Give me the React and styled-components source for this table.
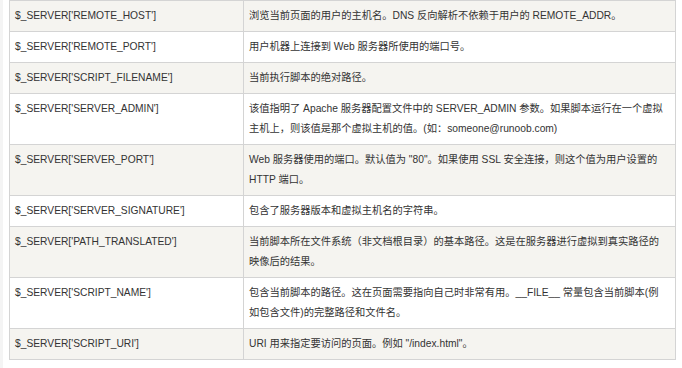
import React from "react";
import styled, { createGlobalStyle } from "styled-components";

const Global = createGlobalStyle`
  html, body { margin: 0; padding: 0; background: #fff; }
  body {
    font-family: "Liberation Sans", Arial, "Noto Sans CJK SC", sans-serif;
    color: #333;
  }
`;

const Page = styled.div`
  width: 682px;
  height: 368px;
  box-sizing: border-box;
  border-left: 3px solid #f4f4f4;
  padding-left: 6px;
  overflow: hidden;
`;

const Table = styled.table`
  border-collapse: collapse;
  table-layout: fixed;
  width: 667px;
  font-size: 10.25px;
  line-height: 20px;
`;

const Row = styled.tr`
  background: ${(p) => (p.$odd ? "#f5f4f0" : "#ffffff")};
`;

const Cell = styled.td`
  border: 1px solid #d4d4d4;
  padding: 5px 5px;
  vertical-align: top;
  text-align: left;
  white-space: nowrap;
  overflow: hidden;
  color: #333;
`;

const rows = [
  ["$_SERVER['REMOTE_HOST']", ["浏览当前页面的用户的主机名。DNS 反向解析不依赖于用户的 REMOTE_ADDR。"]],
  ["$_SERVER['REMOTE_PORT']", ["用户机器上连接到 Web 服务器所使用的端口号。"]],
  ["$_SERVER['SCRIPT_FILENAME']", ["当前执行脚本的绝对路径。"]],
  [
    "$_SERVER['SERVER_ADMIN']",
    [
      "该值指明了 Apache 服务器配置文件中的 SERVER_ADMIN 参数。如果脚本运行在一个虚拟",
      "主机上，则该值是那个虚拟主机的值。(如：someone@runoob.com)",
    ],
  ],
  [
    "$_SERVER['SERVER_PORT']",
    [
      "Web 服务器使用的端口。默认值为 \"80\"。如果使用 SSL 安全连接，则这个值为用户设置的",
      "HTTP 端口。",
    ],
  ],
  ["$_SERVER['SERVER_SIGNATURE']", ["包含了服务器版本和虚拟主机名的字符串。"]],
  [
    "$_SERVER['PATH_TRANSLATED']",
    [
      "当前脚本所在文件系统（非文档根目录）的基本路径。这是在服务器进行虚拟到真实路径的",
      "映像后的结果。",
    ],
  ],
  [
    "$_SERVER['SCRIPT_NAME']",
    [
      "包含当前脚本的路径。这在页面需要指向自己时非常有用。__FILE__ 常量包含当前脚本(例",
      "如包含文件)的完整路径和文件名。",
    ],
  ],
  ["$_SERVER['SCRIPT_URI']", ["URI 用来指定要访问的页面。例如 \"/index.html\"。"]],
];

export default function App() {
  return (
    <>
      <Global />
      <Page>
        <Table>
          <colgroup>
            <col style={{ width: "234px" }} />
            <col />
          </colgroup>
          <tbody>
            {rows.map(([name, lines], i) => (
              <Row key={name} $odd={i % 2 === 0}>
                <Cell>{name}</Cell>
                <Cell>
                  {lines.map((l, j) => (
                    <React.Fragment key={j}>
                      {j > 0 && <br />}
                      {l}
                    </React.Fragment>
                  ))}
                </Cell>
              </Row>
            ))}
          </tbody>
        </Table>
      </Page>
    </>
  );
}
